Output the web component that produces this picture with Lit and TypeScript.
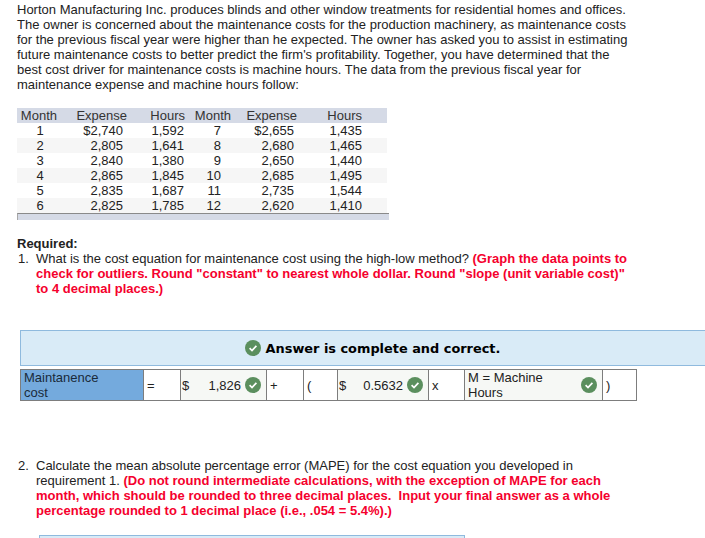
import { LitElement, html, css, svg } from "lit";
import { customElement } from "lit/decorators.js";

const rows = [
  ["1", "$2,740", "1,592", "7", "$2,655", "1,435"],
  ["2", "2,805", "1,641", "8", "2,680", "1,465"],
  ["3", "2,840", "1,380", "9", "2,650", "1,440"],
  ["4", "2,865", "1,845", "10", "2,685", "1,495"],
  ["5", "2,835", "1,687", "11", "2,735", "1,544"],
  ["6", "2,825", "1,785", "12", "2,620", "1,410"],
];

const check = html`<svg class="check" viewBox="0 0 16 16" width="16" height="16" aria-hidden="true">
  ${svg`<circle cx="8" cy="8" r="8" fill="#5b8f5e"></circle>
  <path d="M4.6 8.2 L7 10.5 L11.4 5.8" fill="none" stroke="#fff" stroke-width="1.7"></path>`}
</svg>`;

@customElement("app-root")
export class AppRoot extends LitElement {
  static styles = css`
    :host {
      display: block;
      width: 705px;
      height: 538px;
      overflow: hidden;
      background: #fff;
      color: #222;
      font: 13px/15px "Liberation Sans", Arial, sans-serif;
    }
    .page { padding: 2px 0 0 17px; }
    .red { color: #f5002d; font-weight: bold; }
    .data { margin-top: 16px; width: 372px; }
    .row { display: grid; grid-template-columns: 46px 60px 61px 37px 73px 68px 27px; height: 15px; width: 370px; }
    .row.head { background: #d5dae6; color: #333; grid-template-columns: 40px 70px 58px 46px 66px 65px 25px; }
    .row.alt { background: #f6f6f6; }
    .row > span { white-space: nowrap; }
    .c { text-align: center; }
    .r { text-align: right; }
    .foot { height: 6px; background: #d5dae6; border-top: 1px solid #8a8a8a; border-left: 1px solid #a8a8a8; width: 371px; }
    .required { margin-top: 16px; }
    .item { display: grid; grid-template-columns: 19px 1fr; }
    .num { padding-left: 1px; }
    .banner {
      margin: 34px 0 0 3px;
      width: 700px;
      height: 36px;
      box-sizing: border-box;
      background: #d9ebf7;
      border: 1px solid #8fbade;
      border-right: 0;
      display: flex;
      align-items: center;
      justify-content: center;
      gap: 5px;
      padding-left: 4px;
      font: bold 12.9px "DejaVu Sans", Verdana, sans-serif;
      color: #000;
    }
    .check { flex: none; display: block; }
    .eq {
      margin: 3px 0 0 3px;
      width: 617px;
      height: 32px;
      box-sizing: border-box;
      display: grid;
      grid-template-columns: 122px 37px 86px 37px 34px 91px 36px 138px 34px;
      border: 1px solid #7d7d7d;
      align-items: stretch;
    }
    .eq > div {
      border-left: 1px solid #7d7d7d;
      display: flex;
      align-items: center;
      padding: 0 4px 0 3px;
      min-width: 0;
      white-space: nowrap;
    }
    .eq > div:first-child { border-left: 0; background: #74aadd; color: #1a2a3a; }
    .eq > .ok { background: #f6f8f5; padding-right: 5px; }
    .eq > .money { padding-left: 1px; }
    .grow { flex: 1; }
    .val { margin-right: 4px; }
    .second { margin-top: 57px; }
    .next {
      margin: 17px 0 0 22px;
      width: 426px;
      height: 4px;
      box-sizing: border-box;
      border: 1px solid #8fbade;
      border-bottom: 0;
      background: #d9ebf7;
    }
  `;

  render() {
    return html`<div class="page">
      <div class="intro">
        Horton Manufacturing Inc. produces blinds and other window treatments for residential homes and offices.<br />
        The owner is concerned about the maintenance costs for the production machinery, as maintenance costs<br />
        for the previous fiscal year were higher than he expected. The owner has asked you to assist in estimating<br />
        future maintenance costs to better predict the firm's profitability. Together, you have determined that the<br />
        best cost driver for maintenance costs is machine hours. The data from the previous fiscal year for<br />
        maintenance expense and machine hours follow:
      </div>

      <div class="data">
        <div class="row head">
          <span class="r">Month</span><span class="r">Expense</span><span class="r">Hours</span><span class="r">Month</span><span class="r">Expense</span><span class="r">Hours</span><span></span>
        </div>
        ${rows.map(
          (r, i) => html`<div class="row ${i % 2 ? "alt" : ""}">
            <span class="c">${r[0]}</span>
            <span class="r">${r[1]}</span>
            <span class="r">${r[2]}</span>
            <span class="r">${r[3]}</span>
            <span class="r">${r[4]}</span>
            <span class="r">${r[5]}</span>
            <span></span>
          </div>`
        )}
        <div class="foot"></div>
      </div>

      <div class="required">
        <b>Required:</b>
        <div class="item">
          <span class="num">1.</span>
          <div>
            What is the cost equation for maintenance cost using the high-low method?
            <span class="red">(Graph the data points to<br />
            check for outliers. Round "constant" to nearest whole dollar. Round "slope (unit variable cost)"<br />
            to 4 decimal places.)</span>
          </div>
        </div>
      </div>

      <div class="banner">${check}<span>Answer is complete and correct.</span></div>

      <div class="eq">
        <div>Maintanence<br />cost</div>
        <div>=</div>
        <div class="ok money"><span>$</span><span class="grow"></span><span class="val">1,826</span>${check}</div>
        <div>+</div>
        <div>(</div>
        <div class="ok money"><span>$</span><span class="grow"></span><span class="val">0.5632</span>${check}</div>
        <div>x</div>
        <div class="ok"><span>M = Machine<br />Hours</span><span class="grow"></span>${check}</div>
        <div>)</div>
      </div>

      <div class="item second">
        <span class="num">2.</span>
        <div>
          Calculate the mean absolute percentage error (MAPE) for the cost equation you developed in<br />
          requirement 1. <span class="red">(Do not round intermediate calculations, with the exception of MAPE for each<br />
          month, which should be rounded to three decimal places.&nbsp; Input your final answer as a whole<br />
          percentage rounded to 1 decimal place (i.e., .054 = 5.4%).)</span>
        </div>
      </div>

      <div class="next"></div>
    </div>`;
  }
}
